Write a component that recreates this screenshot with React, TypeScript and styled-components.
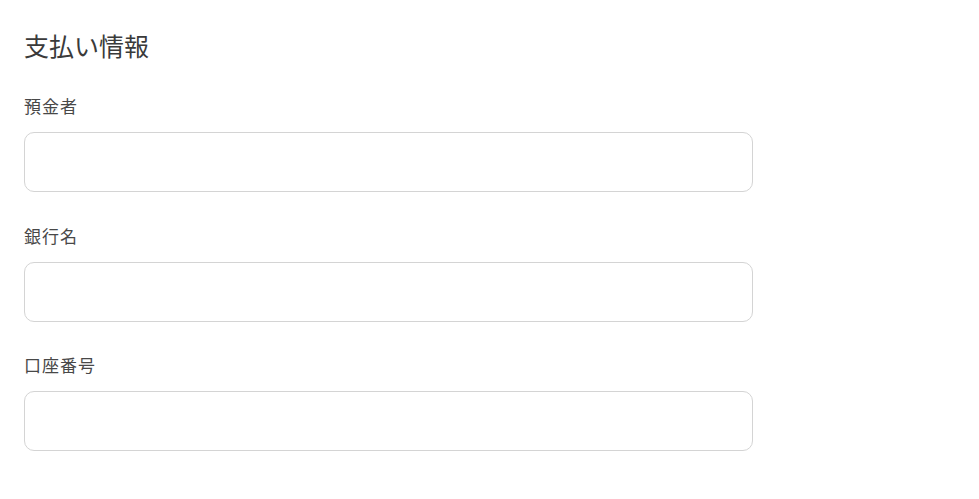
import React from "react";
import styled, { createGlobalStyle } from "styled-components";

const GlobalStyle = createGlobalStyle`
  html, body { margin: 0; padding: 0; background: #ffffff; }
  body { font-family: "Noto Sans CJK JP", "Noto Sans", sans-serif; color: #333333; }
`;

const Page = styled.div`
  padding: 27px 24px 24px 24px;
  width: 729px;
`;

const Title = styled.h2`
  margin: 0 0 31px 0;
  font-size: 25px;
  font-weight: 400;
  line-height: 36px;
  color: #3a3a3a;
`;

const Field = styled.div`
  display: flex;
  flex-direction: column;
  gap: 14px;
  margin-bottom: 31.5px;
`;

const Label = styled.label`
  font-size: 17px;
  line-height: 24px;
  color: #484848;
  letter-spacing: 1px;
`;

const Input = styled.input`
  box-sizing: border-box;
  width: 729px;
  height: 60px;
  border: 1px solid #d4d4d4;
  border-radius: 10px;
  padding: 0 16px;
  font-size: 16px;
  font-family: inherit;
  outline: none;
  background: #fff;
`;

const fields = ["預金者", "銀行名", "口座番号"];

export default function App() {
  return (
    <>
      <GlobalStyle />
      <Page>
        <Title>支払い情報</Title>
        {fields.map((f) => (
          <Field key={f}>
            <Label>{f}</Label>
            <Input type="text" />
          </Field>
        ))}
      </Page>
    </>
  );
}
